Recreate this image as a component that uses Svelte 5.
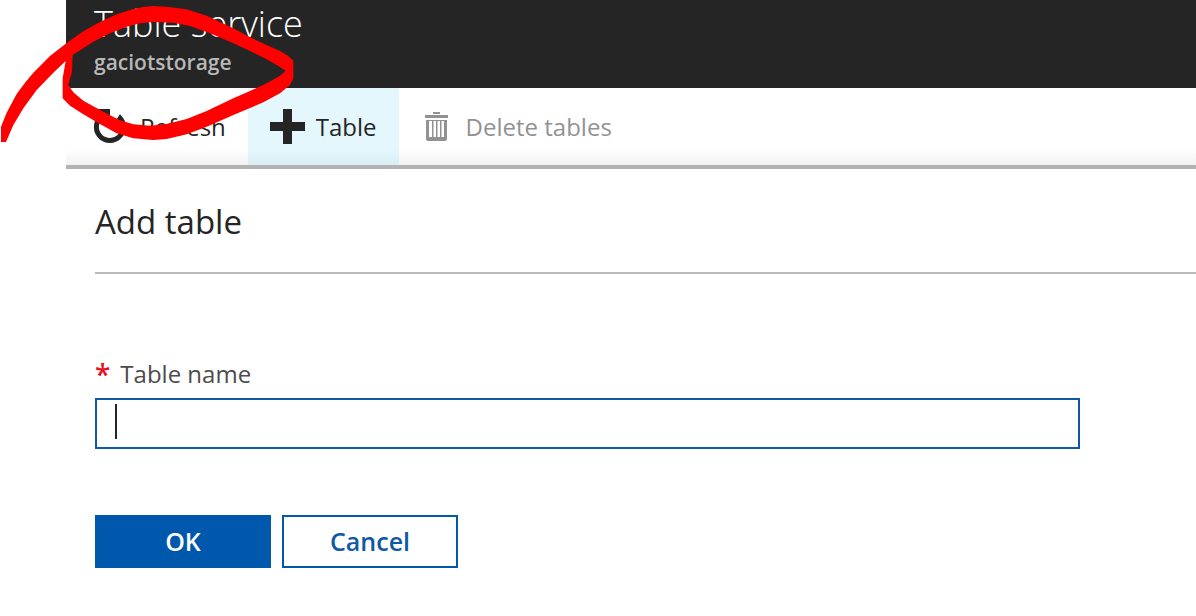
<script>
  let name = $state('');
</script>

<div class="page">
  <main class="blade">
    <header>
      <h1>Table service</h1>
      <p>gaciotstorage</p>
    </header>

    <nav class="toolbar" aria-label="Commands">
      <button type="button" class="command refresh">
        <svg width="36" height="36" viewBox="0 0 36 36" aria-hidden="true">
          <path d="M10 7A13.5 13.5 0 1 0 27 8" fill="none" stroke="#252525" stroke-width="5" />
          <path d="M5 0h13v13z" fill="#252525" />
          <path d="M28 5l7 11-12-3z" fill="#252525" />
        </svg>
        Refresh
      </button>
      <button type="button" class="command active">
        <svg width="36" height="36" viewBox="0 0 36 36" aria-hidden="true">
          <path d="M13 0h9v13h13v9H22v13h-9V22H0v-9h13z" fill="#252525" />
        </svg>
        Table
      </button>
      <button type="button" class="command delete" disabled>
        <svg width="24" height="30" viewBox="0 0 24 30" aria-hidden="true">
          <path d="M8 0h7v2H8zM0 3h23v3H0z" fill="#929292" />
          <path fill-rule="evenodd" d="M1 8h21v19q0 2-2 2H3q-2 0-2-2zM4 9v16h3V9zM8.500 9v16h2.500V9zM12.500 9v16h2.500V9zM16.500 9v16h2.500V9z" fill="#929292" />
        </svg>
        Delete tables
      </button>
    </nav>

    <section>
      <h2>Add table</h2>
      <form onsubmit={(event) => event.preventDefault()}>
        <label for="table-name"><span class="required">*</span>Table name</label>
        <div class="field">
          <input id="table-name" type="text" autocomplete="off" required bind:value={name} />
          {#if name === ''}<span class="caret"></span>{/if}
        </div>
        <div class="actions">
          <button type="submit" class="primary">OK</button>
          <button type="button">Cancel</button>
        </div>
      </form>
    </section>
  </main>

  <svg class="scribble" width="320" height="160" viewBox="0 0 960 480" aria-hidden="true">
    <path
      fill="#f00"
      fill-rule="evenodd"
      d="M3 380L20 338L50 282L75 248L100 218L150 168L205 125L250 94L300 66L350 43L400 27L430 21L460 18L500 20L560 28L620 47L700 85L750 112L800 135L840 153L865 168L880 182V235L870 255L840 280L790 307L700 345L620 380L560 403L500 417L460 420L400 415L350 400L300 372L250 343L210 317L188 295V235L197 183L160 218L110 270L70 325L40 375L18 426H3Z
         M218 165L280 125L330 100L380 80L420 70L460 66L520 68L570 78L630 100L700 130L750 153L800 178L835 198L857 212L840 227L800 250L750 273L700 295L620 333L560 357L500 372L450 377L400 373L360 361L310 335L250 302L220 277L205 255L216 215Z"
    />
  </svg>
</div>

<style>
  :global(body) {
    margin: 0;
    background: #fff;
  }

  .page {
    position: relative;
    padding-left: 66px;
    font-family: 'Segoe UI', 'Open Sans', 'Noto Sans', sans-serif;
    color: #252525;
  }

  header {
    box-sizing: border-box;
    height: 88px;
    padding-left: 28px;
    background: #252525;
  }

  h1,
  h2,
  p {
    margin: 0;
  }

  h1 {
    font-size: 36px;
    font-weight: 300;
    line-height: 48px;
    color: #fff;
  }

  p {
    font-size: 21px;
    font-weight: 600;
    line-height: 28px;
    color: #b8b8b8;
  }

  button {
    font: inherit;
    cursor: pointer;
  }

  .toolbar {
    display: flex;
    height: 77px;
    border-bottom: 4px solid #b2b2b2;
    background: linear-gradient(#fff 80%, #f1f1f1);
  }

  .command {
    display: flex;
    align-items: center;
    gap: 12px;
    padding: 0 22px;
    border: 0;
    background: none;
    font-size: 24px;
    color: #252525;
    white-space: nowrap;
  }

  .refresh {
    padding-left: 26px;
  }

  .active {
    gap: 10px;
    background: linear-gradient(#e3f7fd 80%, #d9edf3);
  }

  .delete {
    gap: 17px;
    padding-left: 26px;
    color: #929292;
    cursor: default;
  }

  section {
    padding: 29px 0 48px 29px;
  }

  h2 {
    padding-bottom: 26px;
    border-bottom: 2px solid #bababa;
    font-size: 33px;
    font-weight: 400;
    line-height: 48px;
  }

  form {
    padding: 83px 116px 0 0;
  }

  label {
    display: flex;
    gap: 10px;
    font-size: 24px;
    line-height: 34px;
    color: #4c4c4c;
  }

  .required {
    font-size: 28px;
    font-weight: 600;
    color: #e81123;
  }

  .field {
    position: relative;
    margin-top: 7px;
  }

  input {
    display: block;
    box-sizing: border-box;
    width: 100%;
    height: 51px;
    padding: 0 18px;
    border: 2px solid #0f58a5;
    border-radius: 0;
    outline: 0;
    font: inherit;
    font-size: 24px;
  }

  .caret {
    position: absolute;
    top: 6px;
    left: 20px;
    width: 2px;
    height: 35px;
    background: #252525;
    pointer-events: none;
  }

  .actions {
    display: flex;
    gap: 11px;
    margin-top: 66px;
  }

  .actions button {
    box-sizing: border-box;
    width: 176px;
    height: 53px;
    padding: 0 0 2px;
    border: 2px solid #0058ad;
    background: #fff;
    font-size: 25px;
    font-weight: 600;
    color: #0f58a5;
  }

  .actions .primary {
    background: #0058ad;
    color: #fff;
  }

  .scribble {
    position: absolute;
    top: 0;
    left: 0;
    pointer-events: none;
  }
</style>
